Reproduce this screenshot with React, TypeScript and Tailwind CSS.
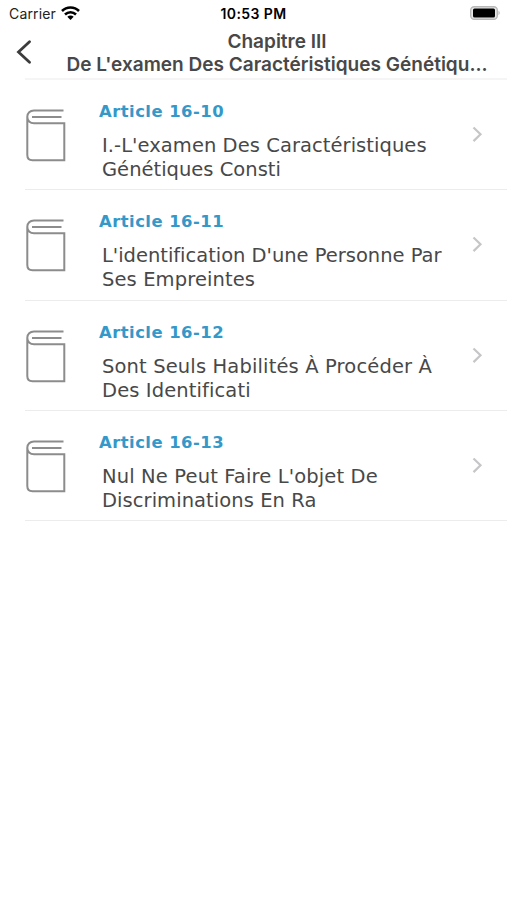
import React from 'react';

const articles = [
  {
    title: 'Article 16-10',
    lines: [
      { text: "I.-L'examen Des Caractéristiques", tracking: 'tracking-[0.06px]' },
      { text: 'Génétiques Consti', tracking: 'tracking-[0.01px]' },
    ],
  },
  {
    title: 'Article 16-11',
    lines: [
      { text: "L'identification D'une Personne Par", tracking: 'tracking-[-0.02px]' },
      { text: 'Ses Empreintes', tracking: 'tracking-[0.11px]' },
    ],
  },
  {
    title: 'Article 16-12',
    lines: [
      { text: 'Sont Seuls Habilités À Procéder À', tracking: 'tracking-[0.14px]' },
      { text: 'Des Identificati', tracking: 'tracking-[0.11px]' },
    ],
  },
  {
    title: 'Article 16-13',
    lines: [
      { text: "Nul Ne Peut Faire L'objet De", tracking: 'tracking-[0.14px]' },
      { text: 'Discriminations En Ra', tracking: 'tracking-[0.06px]' },
    ],
  },
];

function BookIcon() {
  return (
    <svg width="42" height="54" viewBox="0 0 42 54" fill="none" stroke="#8c8c8c" strokeWidth="2">
      <path d="M38.500 2.500H9C5 2.500 2.300 5.200 2.300 8.800V47C2.300 50.300 4.300 52.200 7.500 52.200H39.300V15.300H9C5 15.300 2.300 12.700 2.300 8.800" />
      <path d="M7 9H36.500" />
    </svg>
  );
}

export default function App() {
  return (
    <div className="h-[900px] w-[507px] overflow-hidden bg-white text-[#484848]">
      <header className="flex h-[80px] flex-col">
        <div className="grid h-[27px] grid-cols-3 items-center font-['Inter',sans-serif] text-[14px] text-black">
          <div className="flex items-center gap-[5px] pl-[9px]">
            <span className="tracking-[0.15px] text-[#222]">Carrier</span>
            <svg className="-mt-[2px]" width="19" height="14" viewBox="0 0 19 14" fill="none" stroke="#000" strokeWidth="2.600">
              <path d="M1 5C5.700 .300 13.300 .300 18 5M4 8.500C7.200 5.500 11.800 5.500 15 8.500" />
              <path d="M6.300 10.800C8.200 9.200 10.800 9.200 12.700 10.800L9.500 13.900Z" fill="#000" stroke="none" />
            </svg>
          </div>
          <span className="text-center font-semibold tracking-[0.4px]">10:53 PM</span>
          <svg className="-mt-px mr-[6px] justify-self-end" width="31" height="14" viewBox="0 0 31 14">
            <rect x=".7" y=".7" width="26.600" height="12.600" rx="3.500" fill="#e8e8e8" stroke="#b8b8b8" strokeWidth="1.400" />
            <rect x="3" y="2.500" width="22" height="9" rx="1.500" />
            <path d="M28.500 4.800Q31 7 28.500 9.200Z" fill="#b8b8b8" />
          </svg>
        </div>
        <div className="flex pt-[2px]">
          <button className="flex h-[46px] w-[48px] items-center pl-4" aria-label="Retour">
            <svg width="16" height="24" viewBox="0 0 16 24" fill="none" stroke="#3c3c3c" strokeWidth="2.800" strokeLinecap="round"><path d="M13.500 1.800L2.500 12L13.500 22.200" /></svg>
          </button>
          <h1 className="w-[458px] pt-px text-center font-['Inter',sans-serif] text-[19.050px] font-semibold leading-[23px]">
            <span className="block">Chapitre III</span>
            <span className="block whitespace-nowrap">De L'examen Des Caractéristiques Génétiqu...</span>
          </h1>
        </div>
        <div className="ml-[25px] mt-auto h-[2px] bg-[#f5f5f5]" />
      </header>
      <main className="font-['DejaVu_Sans',sans-serif]">
        {articles.map((article) => (
          <article key={article.title} className="ml-[25px] flex h-[110.300px] border-b border-[#ececec]">
            <div className="w-[74px] pt-7"><BookIcon /></div>
            <div className="w-[373px] pt-5">
              <h2 className="text-[16.400px] font-bold leading-[23px] tracking-[0.480px] text-[#3498c9]">{article.title}</h2>
              <p className="ml-[3px] mt-[11px] text-[19.500px] leading-[24px]">
                {article.lines.map((line) => (
                  <span key={line.text} className={`block whitespace-nowrap ${line.tracking}`}>{line.text}</span>
                ))}
              </p>
            </div>
            <svg className="mt-[46px]" width="12" height="16" viewBox="0 0 12 16" fill="none" stroke="#c6c6c9" strokeWidth="2.200"><path d="M1.500 1.500L8.500 8.300L1.500 15.100" /></svg>
          </article>
        ))}
      </main>
    </div>
  );
}
